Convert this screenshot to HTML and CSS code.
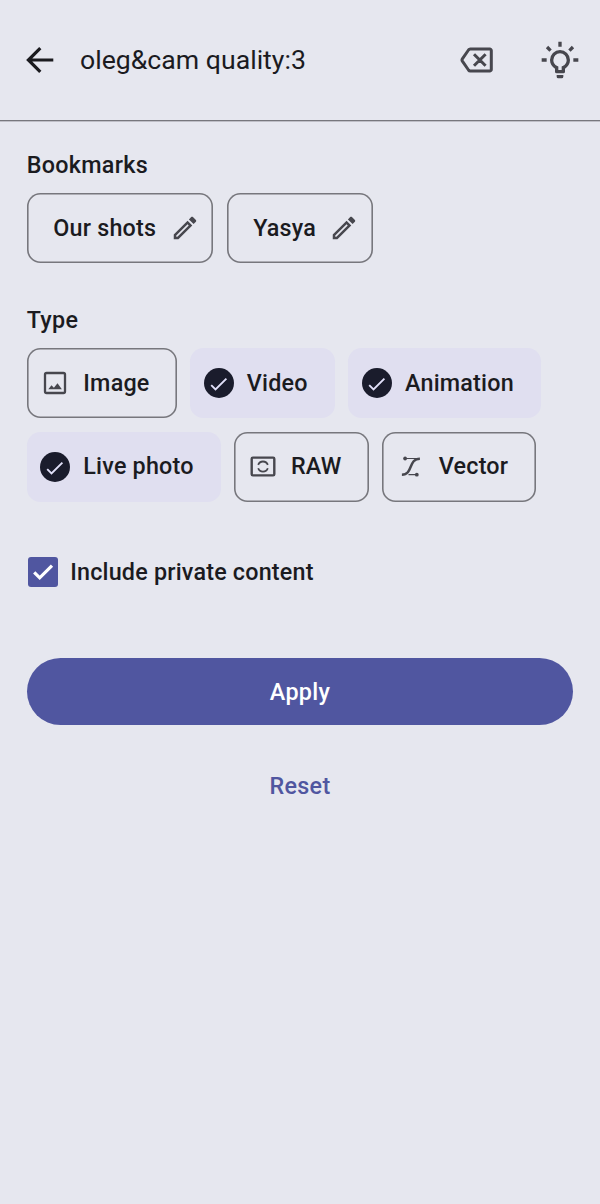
FILE: index.html
```html
<!DOCTYPE html>
<html lang="en">
<head>
<meta charset="utf-8">
<title>Search</title>
<link rel="stylesheet" href="styles.css">
</head>
<body>
<svg class="defs" width="0" height="0">
  <symbol id="pencil" viewBox="0 0 24 24"><path fill="currentColor" d="M14.06 9.02l.92.92L5.92 19H5v-.92l9.06-9.06M17.66 3c-.25 0-.51.1-.7.29l-1.83 1.83 3.75 3.75 1.83-1.83c.39-.39.39-1.02 0-1.41l-2.34-2.34c-.2-.2-.45-.29-.71-.29zm-3.6 3.19L3 17.25V21h3.75L17.81 9.94l-3.75-3.75z"/></symbol>
  <symbol id="check" viewBox="0 0 30 30"><circle cx="15" cy="15" r="15" fill="#1a1c2c"/><path d="M7.2 17.2l4.3 4.3L22.4 10.6" fill="none" stroke="#e1e0f9" stroke-width="1.9"/></symbol>
</svg>
<header class="bar">
  <svg class="back" viewBox="0 0 40 40"><path d="M33.3 20H8.8M20.3 8.1L8.4 20l11.9 11.9" fill="none" stroke="#1b1b1f" stroke-width="3.2"/></svg>
  <span class="query">oleg&amp;cam quality:3</span>
  <svg class="action" viewBox="0 0 40 40"><path d="M13.7 8.9H33.2a1.5 1.5 0 0 1 1.5 1.5v18.8a1.5 1.5 0 0 1-1.5 1.5H13.7a2.2 2.2 0 0 1-1.8-.9L5.6 20.7a1.7 1.7 0 0 1 0-1.8l6.3-9.1a2.2 2.2 0 0 1 1.8-.9zM17.4 14l11.6 11.6M29 14L17.4 25.6" transform="translate(-.4 .2)" fill="none" stroke="#47474e" stroke-width="3"/></svg>
  <svg class="action bulb" viewBox="0 0 24 24"><path fill="#47474e" d="M20,11H23V13H20V11M1,11H4V13H1V11M13,1V4H11V1H13M4.92,3.5L7.05,5.64L5.63,7.05L3.5,4.93L4.92,3.5M16.95,5.63L19.07,3.5L20.5,4.93L18.37,7.05L16.95,5.63M12,6A6,6 0 0,1 18,12C18,14.22 16.79,16.16 15,17.2V19A1,1 0 0,1 14,20H10A1,1 0 0,1 9,19V17.2C7.21,16.16 6,14.22 6,12A6,6 0 0,1 12,6M14,21V22A1,1 0 0,1 13,23H11A1,1 0 0,1 10,22V21H14M11,18H13V15.87C14.73,15.43 16,13.86 16,12A4,4 0 0,0 12,8A4,4 0 0,0 8,12C8,13.86 9.27,15.43 11,15.87V18Z"/></svg>
</header>
<main class="content">
  <h2 class="label">Bookmarks</h2>
  <div class="chips">
    <div class="chip bookmark">Our shots<svg class="icon"><use href="#pencil"/></svg></div>
    <div class="chip bookmark">Yasya<svg class="icon"><use href="#pencil"/></svg></div>
  </div>
  <h2 class="label type">Type</h2>
  <div class="chips">
    <div class="chip"><svg class="icon" viewBox="0 0 30 30"><rect x="5" y="5" width="20" height="20" rx="1.6" fill="none" stroke="currentColor" stroke-width="2.3"/><path d="M8.3 21.3l3.2-4.1 2.4 2.6 3.6-4.6 4.4 6.1z" fill="currentColor"/></svg>Image</div>
    <div class="chip on"><svg class="icon"><use href="#check"/></svg>Video</div>
    <div class="chip on"><svg class="icon"><use href="#check"/></svg>Animation</div>
    <div class="chip on"><svg class="icon"><use href="#check"/></svg>Live photo</div>
    <div class="chip"><svg class="icon" viewBox="0 0 30 30"><rect x="3.7" y="5.6" width="22.6" height="17.8" rx="1.2" fill="none" stroke="currentColor" stroke-width="2.4"/><path d="M10.2 12.9a5.1 5.1 0 0 1 9.6 0M10.2 16.3a5.1 5.1 0 0 0 9.6 0" fill="none" stroke="currentColor" stroke-width="1.8"/></svg>RAW</div>
    <div class="chip"><svg class="icon" viewBox="0 0 30 30"><path d="M5.9 22.7c11.4 0 6.2-16 18-16" fill="none" stroke="currentColor" stroke-width="2.5"/><path d="M9.2 6.5h12.5M12.5 22.6h8" stroke="currentColor" stroke-width="1.1"/><circle cx="9.1" cy="6.5" r="1.9" fill="currentColor"/><circle cx="20.8" cy="22.7" r="1.9" fill="currentColor"/></svg>Vector</div>
  </div>
  <div class="private">
    <svg class="box" viewBox="0 0 30 30"><rect width="30" height="30" rx="3" fill="#5056a0"/><path d="M6.2 15.3l5.5 5.5L24 8.7" fill="none" stroke="#fff" stroke-width="3.2"/></svg>
    <span class="caption">Include private content</span>
  </div>
  <button class="button apply">Apply</button>
  <button class="button reset">Reset</button>
</main>
</body>
</html>
```
FILE: styles.css
```css
* { box-sizing: border-box; }
body {
  margin: 0;
  min-height: 1204px;
  background: #e6e7ef;
  color: #1b1b1f;
  font: 500 23.33px/33.33px Roboto, sans-serif;
  letter-spacing: 0.2px;
}
.defs { display: block; height: 0; }
svg { display: block; flex: none; }
.bar {
  display: flex;
  align-items: center;
  height: 121px;
  padding: 0 20px 1.4px;
  box-shadow: inset 0 -1px #77777d, 0 0.6px #a5a6ac;
}
.back, .action { width: 40px; height: 40px; }
.query {
  flex: 1;
  margin-left: 20px;
  padding-top: 2px;
  font-size: 26.67px;
  font-weight: 400;
  letter-spacing: 0;
}
.bulb { margin: 0 0 0 43px; }
.content { padding: 28.2px 26.67px 0; }
.label { margin: 0 0 11.2px; font: inherit; height: 33px; letter-spacing: 0.3px; }
.label.type { margin-top: 40.8px; }
.chips { display: flex; flex-wrap: wrap; gap: 13.33px; }
.chip {
  display: flex;
  align-items: center;
  height: 70px;
  padding: 0 27.3px 0 13.33px;
  box-shadow: inset 0 0 0 1.6px #77777d;
  border-radius: 13.33px;
  gap: 13.33px;
}
.chip.on { background: #e0dff0; box-shadow: none; }
.chip.bookmark { padding: 0 13.7px 0 26.67px; }
.icon { width: 30px; height: 30px; color: #47474e; }
.private { display: flex; align-items: center; gap: 12px; height: 33.33px; margin: 53.3px 0 0 1.5px; }
.box { width: 30px; height: 30px; }
.caption { padding-top: 2px; }
.button {
  display: block;
  width: 100%;
  height: 66.67px;
  padding: 2px 0 0;
  border: 0;
  border-radius: 34px;
  font: inherit;
  letter-spacing: 0.3px;
}
.apply { margin-top: 69.7px; background: #5056a0; color: #fff; }
.reset { margin-top: 27.3px; background: none; color: #5056a0; }
```
